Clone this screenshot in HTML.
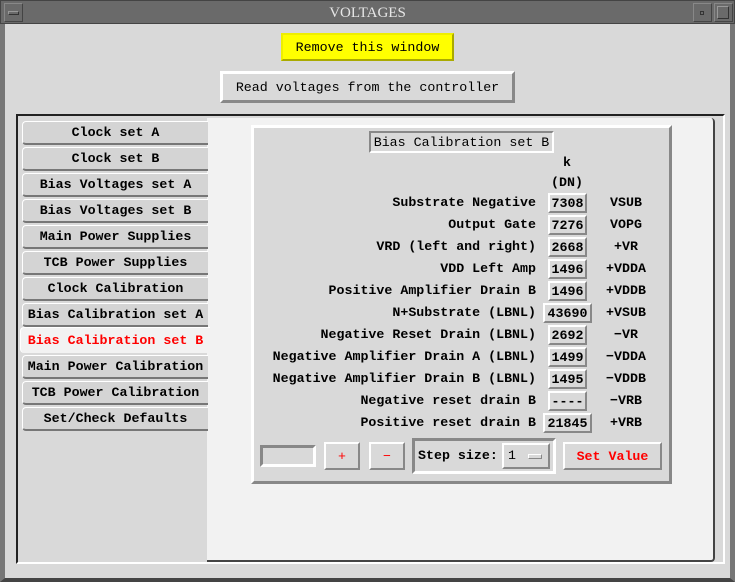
<!DOCTYPE html>
<html><head><meta charset="utf-8"><style>
*{margin:0;padding:0;box-sizing:border-box}
body{width:735px;height:582px;background:#d9d9d9;position:relative;overflow:hidden;font-family:"Liberation Mono",monospace;font-size:13.3px;color:#000;font-weight:bold}
.a{position:absolute}
.r{border:2px solid;border-color:#fff #888 #888 #fff;background:#d9d9d9}
.s{border:2px solid;border-color:#888 #fff #fff #888;background:#d9d9d9}
.c{display:flex;align-items:center;justify-content:center;white-space:nowrap}
.tab{position:absolute;left:22px;width:186px;height:24px;border-top:1px solid #fff;border-left:1px solid #fff;border-bottom:2px solid #777;border-radius:4px 0 0 4px;background:#d4d4d4;display:flex;align-items:center;justify-content:center;white-space:nowrap}
.lab{position:absolute;right:199px;white-space:nowrap;height:22px;line-height:22px}
.val{position:absolute;height:20px;border:2px solid;border-color:#fff #888 #888 #fff;display:flex;align-items:center;justify-content:center}
.unit{position:absolute;left:596px;width:60px;text-align:center;height:22px;line-height:22px}
</style></head><body>
<div class="a" style="left:0;top:0;width:735px;height:582px;border:5px solid #777;border-top:0;border-bottom:4px solid #444"></div>
<div class="a" style="left:0;top:0;width:735px;height:24px;background:#6a6a6a;border:1px solid #444"></div>
<div class="a" style="left:4px;top:3px;width:19px;height:19px;border:1px solid;border-color:#888 #444 #444 #888"></div>
<div class="a" style="left:8px;top:11px;width:11px;height:4px;border:1px solid;border-color:#999 #333 #333 #999"></div>
<div class="a" style="left:693px;top:3px;width:19px;height:19px;border:1px solid;border-color:#888 #444 #444 #888"></div>
<div class="a" style="left:700px;top:11px;width:4px;height:4px;border:1px solid #333"></div>
<div class="a" style="left:714px;top:3px;width:19px;height:19px;border:1px solid;border-color:#888 #444 #444 #888"></div>
<div class="a" style="left:717px;top:6px;width:12px;height:13px;border:1px solid;border-color:#999 #333 #333 #999"></div>
<div class="a c" style="left:0;top:2px;width:735px;height:22px;font-family:'Liberation Serif',serif;font-weight:normal;font-size:15px;color:#e6e6e6">VOLTAGES</div>

<div class="a c" style="left:281px;top:33px;width:173px;height:28px;background:#ff0;border:2px solid;border-color:#ee0 #aa0 #aa0 #ee0;font-weight:normal">Remove this window</div>
<div class="a c r" style="left:220px;top:71px;width:295px;height:32px;border-width:3px;font-weight:normal">Read voltages from the controller</div>

<div class="a" style="left:16px;top:114px;width:709px;height:450px;border:2px solid;border-color:#222 #fff #fff #222"></div>
<div class="a" style="left:207px;top:118px;width:508px;height:444px;background:#f2f2f2;border-right:2px solid #444;border-bottom:2px solid #444;border-radius:0 4px 4px 0"></div>

<div class="tab" style="top:121px">Clock set A</div>
<div class="tab" style="top:147px">Clock set B</div>
<div class="tab" style="top:173px">Bias Voltages set A</div>
<div class="tab" style="top:199px">Bias Voltages set B</div>
<div class="tab" style="top:225px">Main Power Supplies</div>
<div class="tab" style="top:251px">TCB Power Supplies</div>
<div class="tab" style="top:277px">Clock Calibration</div>
<div class="tab" style="top:303px">Bias Calibration set A</div>
<div class="tab" style="top:327px;left:20px;width:190px;height:26px;background:#f2f2f2;border-bottom:0;color:#f00">Bias Calibration set B</div>
<div class="tab" style="top:355px">Main Power Calibration</div>
<div class="tab" style="top:381px">TCB Power Calibration</div>
<div class="tab" style="top:407px">Set/Check Defaults</div>

<div class="a r" style="left:251px;top:125px;width:421px;height:359px;border-width:3px"></div>
<div class="a c s" style="left:369px;top:131px;width:185px;height:22px;font-weight:normal">Bias Calibration set B</div>
<div class="a c" style="left:548px;top:152px;width:38px;height:20px">k</div>
<div class="a c" style="left:548px;top:172px;width:38px;height:20px">(DN)</div>

<div class="lab" style="top:192px">Substrate Negative</div><div class="val" style="left:548px;top:193px;width:39px">7308</div><div class="unit" style="top:192px">VSUB</div>
<div class="lab" style="top:214px">Output Gate</div><div class="val" style="left:548px;top:215px;width:39px">7276</div><div class="unit" style="top:214px">VOPG</div>
<div class="lab" style="top:236px">VRD (left and right)</div><div class="val" style="left:548px;top:237px;width:39px">2668</div><div class="unit" style="top:236px">+VR</div>
<div class="lab" style="top:258px">VDD Left Amp</div><div class="val" style="left:548px;top:259px;width:39px">1496</div><div class="unit" style="top:258px">+VDDA</div>
<div class="lab" style="top:280px">Positive Amplifier Drain B</div><div class="val" style="left:548px;top:281px;width:39px">1496</div><div class="unit" style="top:280px">+VDDB</div>
<div class="lab" style="top:302px">N+Substrate (LBNL)</div><div class="val" style="left:543px;top:303px;width:49px">43690</div><div class="unit" style="top:302px">+VSUB</div>
<div class="lab" style="top:324px">Negative Reset Drain (LBNL)</div><div class="val" style="left:548px;top:325px;width:39px">2692</div><div class="unit" style="top:324px">−VR</div>
<div class="lab" style="top:346px">Negative Amplifier Drain A (LBNL)</div><div class="val" style="left:548px;top:347px;width:39px">1499</div><div class="unit" style="top:346px">−VDDA</div>
<div class="lab" style="top:368px">Negative Amplifier Drain B (LBNL)</div><div class="val" style="left:548px;top:369px;width:39px">1495</div><div class="unit" style="top:368px">−VDDB</div>
<div class="lab" style="top:390px">Negative reset drain B</div><div class="val" style="left:548px;top:391px;width:39px">----</div><div class="unit" style="top:390px">−VRB</div>
<div class="lab" style="top:412px">Positive reset drain B</div><div class="val" style="left:543px;top:413px;width:49px">21845</div><div class="unit" style="top:412px">+VRB</div>

<div class="a s" style="left:260px;top:445px;width:56px;height:22px;border-width:3px"></div>
<div class="a c r" style="left:324px;top:442px;width:36px;height:28px;color:#f00;font-weight:normal">+</div>
<div class="a c r" style="left:369px;top:442px;width:36px;height:28px;color:#f00;font-weight:normal">−</div>
<div class="a s" style="left:412px;top:438px;width:144px;height:36px;border-width:3px"></div>
<div class="a" style="left:418px;top:446px;height:20px;line-height:20px">Step size:</div>
<div class="a r" style="left:502px;top:443px;width:48px;height:26px"></div>
<div class="a" style="left:508px;top:446px;line-height:20px;font-weight:normal">1</div>
<div class="a" style="left:528px;top:454px;width:14px;height:5px;border:1px solid;border-color:#fff #888 #888 #fff"></div>
<div class="a c r" style="left:563px;top:442px;width:99px;height:28px;color:#f00">Set Value</div>
</body></html>
